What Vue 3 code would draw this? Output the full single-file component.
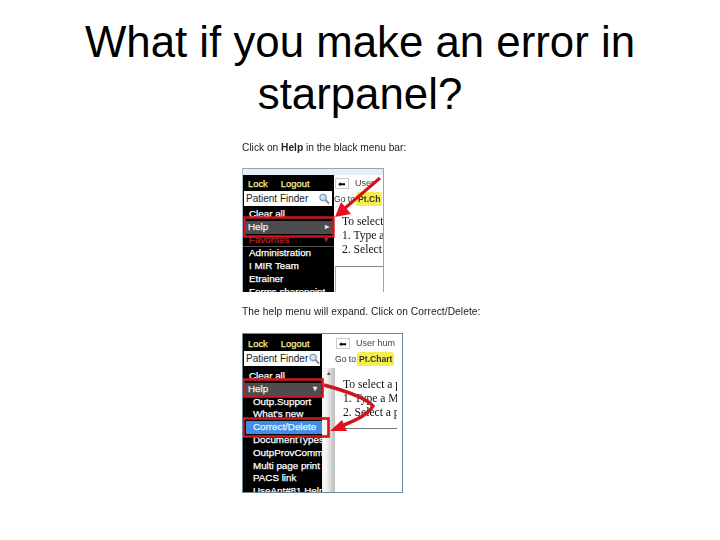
<script setup>
const menu1 = [
  { t: 'Clear all', c: 'row' },
  { t: 'Help', c: 'row help', mark: '▸' },
  { t: 'Favorites', c: 'row fav', mark: '▾' },
  { t: 'Administration', c: 'row' },
  { t: 'I MIR Team', c: 'row' },
  { t: 'Etrainer', c: 'row' },
  { t: 'Forms sharepoint', c: 'row' }
]
const menu2 = [
  { t: 'Clear all', c: 'row' },
  { t: 'Help', c: 'row help', mark: '▾' },
  { t: 'Outp.Support', c: 'row sub' },
  { t: "What's new", c: 'row sub' },
  { t: 'Correct/Delete', c: 'row sub active' },
  { t: 'DocumentTypes', c: 'row sub' },
  { t: 'OutpProvComm', c: 'row sub' },
  { t: 'Multi page print', c: 'row sub' },
  { t: 'PACS link', c: 'row sub' },
  { t: 'UseAnt#81 Help', c: 'row sub' }
]
</script>

<template>
  <main class="slide">
    <h1 class="title">What if you make an error in<br />starpanel?</h1>

    <section class="steps">
      <p class="caption">Click on <b>Help</b> in the black menu bar:</p>
      <div class="shot shot-a">
        <div class="topline"></div>
        <div class="body">
          <aside class="side">
            <div class="links"><span>Lock</span><span>Logout</span></div>
            <div class="finder"><span>Patient Finder</span>
              <svg class="lens" width="12" height="12" viewBox="0 0 13 13"><circle cx="5.5" cy="5" r="3.4" fill="#cfe4f5" stroke="#7fa6c4" stroke-width="1.4" /><path d="M8 7.5l4 4" stroke="#8a8a8a" stroke-width="2" /></svg>
            </div>
            <div v-for="m in menu1" :key="m.t" :class="m.c"><span>{{ m.t }}</span><i v-if="m.mark">{{ m.mark }}</i></div>
          </aside>
          <div class="pane">
            <div class="tabs"><span class="back">⬅</span><span class="user">User</span></div>
            <div class="goto"><span>Go to</span><span class="chart">Pt.Ch</span></div>
            <div class="help-text">To select<br />1. Type a<br />2. Select</div>
            <div class="box"></div>
          </div>
        </div>
        <svg class="marks" width="142" height="124" viewBox="0 0 142 124">
          <rect x="1.5" y="49.5" width="89" height="19" fill="none" stroke="#d01420" stroke-width="2.4" />
          <path d="M137 10L101 41" stroke="#d01420" stroke-width="3" />
          <path d="M92 49l6-15 10 12z" fill="#e8101c" />
        </svg>
      </div>

      <p class="caption second">The help menu will expand. Click on Correct/Delete:</p>
      <div class="shot shot-b">
        <div class="body">
          <aside class="side">
            <div class="links"><span>Lock</span><span>Logout</span></div>
            <div class="finder"><span>Patient Finder</span>
              <svg class="lens" width="12" height="12" viewBox="0 0 13 13"><circle cx="5.5" cy="5" r="3.4" fill="#cfe4f5" stroke="#7fa6c4" stroke-width="1.4" /><path d="M8 7.5l4 4" stroke="#8a8a8a" stroke-width="2" /></svg>
            </div>
            <div v-for="m in menu2" :key="m.t" :class="m.c"><span>{{ m.t }}</span><i v-if="m.mark">{{ m.mark }}</i></div>
          </aside>
          <div class="scroll"><span>▴</span></div>
          <div class="pane">
            <div class="tabs"><span class="back">⬅</span><span class="user">User hum</span></div>
            <div class="goto"><span>Go to</span><span class="chart">Pt.Chart</span></div>
            <div class="help-text">To select a p<br />1. Type a M<br />2. Select a p</div>
            <div class="rule"></div>
          </div>
        </div>
        <svg class="marks" width="161" height="160" viewBox="0 0 161 160">
          <rect x="1.5" y="46.5" width="79" height="17" fill="none" stroke="#d01420" stroke-width="2.6" />
          <rect x="1.5" y="85.5" width="85" height="18" fill="none" stroke="#d01420" stroke-width="2.6" />
          <path d="M82 52C100 57 124 64 131 73C124 84 110 88 100 93" fill="none" stroke="#d01420" stroke-width="3.4" />
          <path d="M88 98l12-11 5 11z" fill="#e8101c" />
        </svg>
      </div>
    </section>
  </main>
</template>

<style>
html, body { background: #fff; }
</style>

<style scoped>
.slide {
  width: 720px;
  height: 540px;
  box-sizing: border-box;
  padding-top: 16px;
  overflow: hidden;
  background: #fff;
  font-family: "Liberation Sans", Arial, sans-serif;
  color: #000;
}
.title {
  margin: 0;
  font-size: 43.8px;
  line-height: 52px;
  font-weight: 400;
  text-align: center;
}
.steps {
  margin: 22px 0 0 242px;
  width: 250px;
}
.caption {
  margin: 0 0 14px;
  height: 12px;
  font-size: 10.2px;
  line-height: 12px;
  color: #222;
  white-space: nowrap;
  filter: blur(0.35px);
}
.second { margin: 14px 0 15px; letter-spacing: 0.08px; }
.shot {
  position: relative;
  box-sizing: border-box;
  overflow: hidden;
  background: #fff;
}
.shot-a {
  width: 142px;
  height: 124px;
  border-left: 1px solid #a9bccb;
  border-right: 1px solid #8fa6b8;
}
.shot-b {
  width: 161px;
  height: 160px;
  border: 1px solid #6f8796;
}
.topline { height: 7px; background: #e8eef2; border-top: 1px solid #8fa6b8; box-sizing: border-box; }
.body { display: flex; filter: blur(0.4px); }
.shot-a .body { height: 117px; }
.shot-b .body { height: 158px; }
.side {
  background: #000;
  flex: none;
  color: #fff;
  font-size: 9.8px;
  font-weight: 400;
  -webkit-text-stroke: 0.25px currentColor;
  overflow: hidden;
}
.shot-a .side { width: 91px; }
.shot-b .side { width: 79px; box-sizing: border-box; padding-top: 1px; }
.links {
  height: 16px;
  display: flex;
  gap: 13px;
  padding: 0 5px;
  align-items: center;
  color: #f4ee9a;
  font-size: 9.4px;
}
.finder {
  height: 15px;
  margin: 0 2px 0 1px;
  padding: 0 2px;
  display: flex;
  align-items: center;
  justify-content: space-between;
  background: #fff;
  color: #222;
  font-size: 10px;
  font-weight: 400;
  -webkit-text-stroke: 0;
  white-space: nowrap;
}
.lens { flex: none; }
.row {
  height: 12.8px;
  line-height: 12.8px;
  padding: 0 6px;
  display: flex;
  justify-content: space-between;
  white-space: nowrap;
}
.row i { font-style: normal; font-size: 8px; }
.row:nth-of-type(3) { margin-top: 2px; }
.shot-b .row:nth-of-type(3) { margin-top: 4px; }
.help { background: #4d4d4d; color: #eee; margin: 0 1px; padding: 0 4px; }
.fav { color: #b3261e; border-bottom: 1px solid #555; }
.sub { padding-left: 10px; }
.active { background: #3f8fe8; margin-left: 3px; padding-left: 7px; color: #e8f2fb; }
.scroll {
  width: 13px;
  flex: none;
  margin-top: 34px;
  background: linear-gradient(90deg, #f6f6f6 30%, #bdbdbd);
  font-size: 7px;
  line-height: 9px;
  color: #555;
  text-align: center;
}
.pane {
  flex: 1;
  min-width: 0;
  font-family: "Liberation Serif", serif;
  overflow: hidden;
  white-space: nowrap;
}
.shot-b .pane { flex: none; width: 62px; padding-top: 1px; }
.tabs {
  height: 16px;
  display: flex;
  align-items: center;
  gap: 6px;
  padding-left: 1px;
  font: 9px "Liberation Sans", sans-serif;
  color: #444;
}
.back {
  width: 14px;
  height: 11px;
  line-height: 10px;
  text-align: center;
  border: 1px solid #ccc;
  color: #000;
  box-sizing: border-box;
  font-size: 9px;
}
.goto {
  height: 15px;
  display: flex;
  align-items: center;
  gap: 1px;
  font: 8.6px "Liberation Sans", sans-serif;
  color: #333;
}
.chart {
  background: #f7ee4a;
  border-radius: 3px 3px 0 0;
  padding: 2px 2px;
  font-weight: 700;
}
.help-text {
  margin: 9px 0 0 8px;
  font-size: 11.6px;
  line-height: 14px;
  color: #111;
}
.shot-b .help-text { margin-top: 12px; }
.box {
  height: 40px;
  margin: 9px 0 0 1px;
  border-top: 1px solid #888;
  border-left: 1px solid #aaa;
}
.rule { margin-top: 8px; border-top: 1px solid #777; }
.marks {
  position: absolute;
  left: 0;
  bottom: 0;
  filter: blur(0.3px);
}
.shot-b .marks { left: -1px; bottom: -1px; }
</style>
